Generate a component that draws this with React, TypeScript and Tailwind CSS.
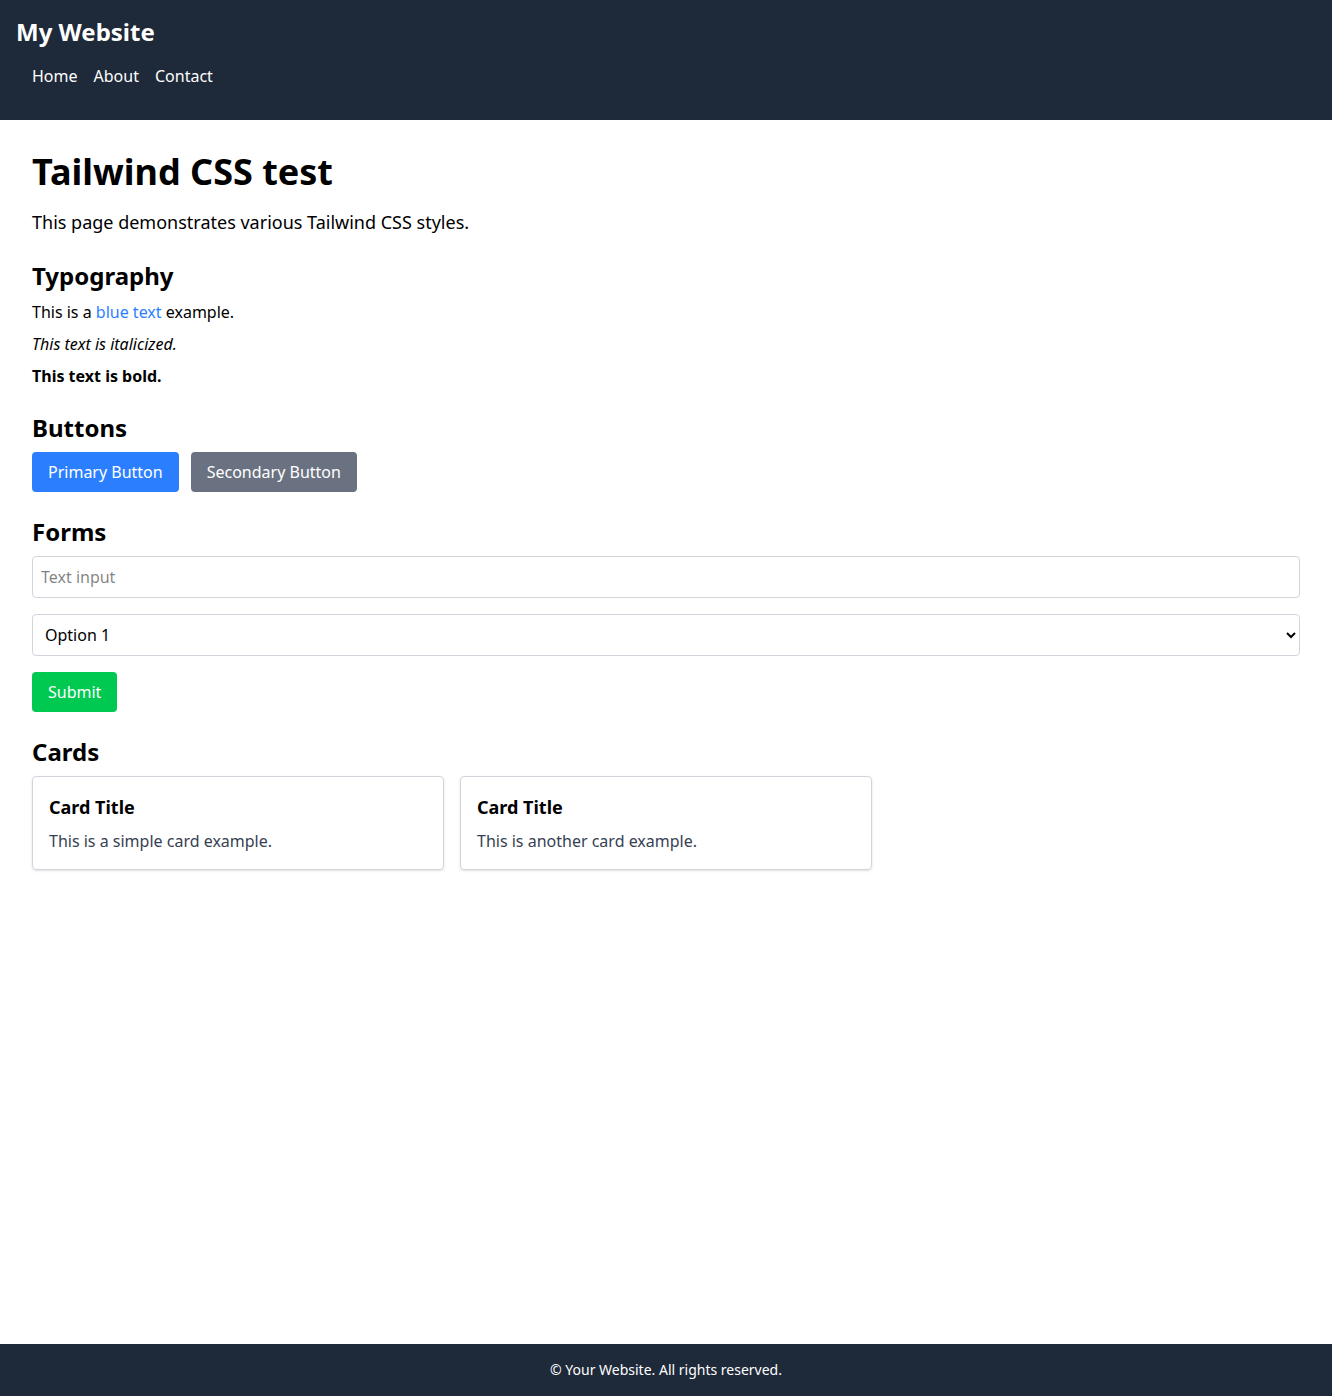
import React from "react";

export default function App() {
  return (
    <div
      className="min-h-screen flex flex-col bg-white text-black"
      style={{ fontFamily: '"Noto Sans", sans-serif' }}
    >
      <header className="bg-gray-800 text-white px-4 pt-4 pb-6">
        <h1 className="text-2xl font-bold">My Website</h1>
        <nav className="mt-2">
          <ul className="flex gap-4 pl-4 py-2">
            <li><a href="#">Home</a></li>
            <li><a href="#">About</a></li>
            <li><a href="#">Contact</a></li>
          </ul>
        </nav>
      </header>

      <main className="flex-1 p-8">
        <h1 className="text-4xl font-bold mb-4">Tailwind CSS test</h1>
        <p className="text-lg mb-6">This page demonstrates various Tailwind CSS styles.</p>

        <section className="mb-6">
          <h2 className="text-2xl font-bold mb-2">Typography</h2>
          <p className="mb-2">
            This is a <span className="text-blue-500">blue text</span> example.
          </p>
          <p className="italic mb-2">This text is italicized.</p>
          <p className="font-bold">This text is bold.</p>
        </section>

        <section className="mb-6">
          <h2 className="text-2xl font-bold mb-2">Buttons</h2>
          <div className="flex gap-3">
            <button className="bg-blue-500 text-white px-4 py-2 rounded">Primary Button</button>
            <button className="bg-gray-500 text-white px-4 py-2 rounded">Secondary Button</button>
          </div>
        </section>

        <section className="mb-6">
          <h2 className="text-2xl font-bold mb-2">Forms</h2>
          <form className="flex flex-col gap-4 items-start" onSubmit={(e) => e.preventDefault()}>
            <input
              type="text"
              placeholder="Text input"
              className="w-full border border-gray-300 rounded p-2"
            />
            <select className="w-full border border-gray-300 rounded p-2 appearance-auto">
              <option>Option 1</option>
              <option>Option 2</option>
              <option>Option 3</option>
            </select>
            <button type="submit" className="bg-green-500 text-white px-4 py-2 rounded">Submit</button>
          </form>
        </section>

        <section>
          <h2 className="text-2xl font-bold mb-2">Cards</h2>
          <div className="grid grid-cols-3 gap-4">
            <div className="border border-gray-300 rounded p-4 shadow-sm">
              <h3 className="text-lg font-bold mb-2">Card Title</h3>
              <p className="text-gray-700">This is a simple card example.</p>
            </div>
            <div className="border border-gray-300 rounded p-4 shadow-sm">
              <h3 className="text-lg font-bold mb-2">Card Title</h3>
              <p className="text-gray-700">This is another card example.</p>
            </div>
          </div>
        </section>
      </main>

      <footer className="bg-gray-800 text-white text-center text-sm p-4">
        © Your Website. All rights reserved.
      </footer>
    </div>
  );
}
